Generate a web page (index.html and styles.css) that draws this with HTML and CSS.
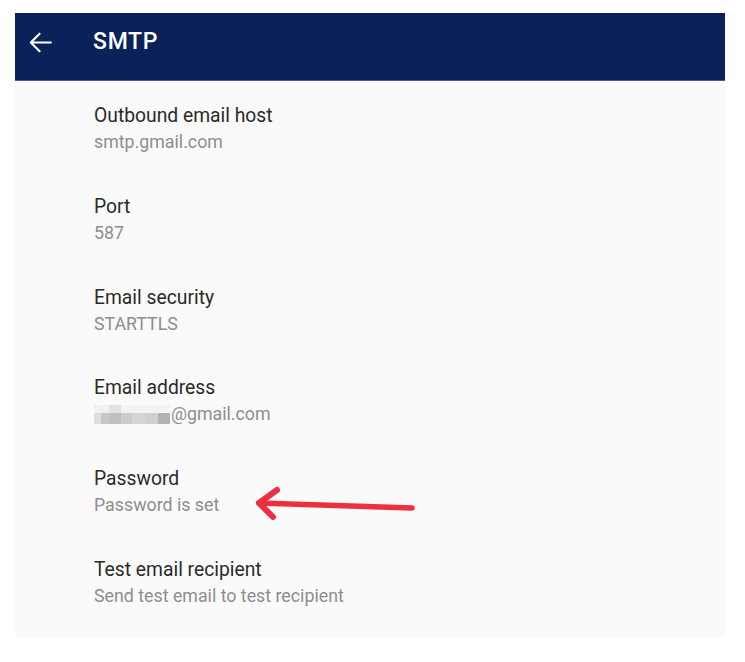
FILE: index.html
```html
<!DOCTYPE html>
<html lang="en">
<head>
<meta charset="utf-8">
<title>SMTP</title>
<link rel="stylesheet" href="styles.css">
</head>
<body>
<div class="page">
  <div class="card">
    <header class="appbar">
      <svg class="back" viewBox="0 0 24 24" width="31" height="31" aria-hidden="true">
        <path d="M20 12H4.6 M11.3 5.2 4.5 12l6.8 6.8" fill="none" stroke="#fff" stroke-width="1.6" stroke-linecap="round" stroke-linejoin="round"/>
      </svg>
      <h1 class="title">SMTP</h1>
    </header>
    <div class="list">
      <div class="row">
        <div class="row-title">Outbound email host</div>
        <div class="row-sub">smtp.gmail.com</div>
      </div>
      <div class="row">
        <div class="row-title">Port</div>
        <div class="row-sub">587</div>
      </div>
      <div class="row">
        <div class="row-title">Email security</div>
        <div class="row-sub">STARTTLS</div>
      </div>
      <div class="row">
        <div class="row-title">Email address</div>
        <div class="row-sub"><span class="mosaic" aria-hidden="true"><i class="m1"></i><i class="m2"></i><i class="m3"></i><i class="m4"></i><i class="m5"></i><i class="m6"></i><i class="m7"></i><i class="m8"></i><i class="m9"></i><i class="m10"></i></span>@gmail.com</div>
      </div>
      <div class="row">
        <div class="row-title">Password</div>
        <div class="row-sub">Password is set</div>
      </div>
      <div class="row">
        <div class="row-title">Test email recipient</div>
        <div class="row-sub">Send test email to test recipient</div>
      </div>
    </div>
    <svg class="annot" viewBox="0 0 190 60" width="190" height="60" aria-hidden="true">
      <path d="M24 36 L177 41" fill="none" stroke="#ee2f3f" stroke-width="5.5" stroke-linecap="round"/>
      <path d="M42 23 L24 36 L38 50" fill="none" stroke="#ee2f3f" stroke-width="6" stroke-linecap="round" stroke-linejoin="round"/>
    </svg>
  </div>
</div>
</body>
</html>
```

FILE: styles.css
```css
* { box-sizing: border-box; }
html, body { margin: 0; padding: 0; background: #ffffff; }
body { font-family: Roboto, "Liberation Sans", Arial, sans-serif; }

.page {
  padding: 13px 20px 0 15px;
}

.card {
  position: relative;
  width: 710px;
  background: #fafafa;
  padding-bottom: 11px;
}

.appbar {
  height: 68px;
  background: #0a215a;
  border-bottom: 1px solid #4d5b86;
  display: flex;
  align-items: center;
  padding: 0 0 9px 10px;
}

.back { display: block; flex: none; }

.title {
  margin: 0 0 0 37px;
  font-size: 23px;
  font-weight: 500;
  letter-spacing: 0.7px;
  color: #ffffff;
  line-height: 26px;
}

.list { display: flex; flex-direction: column; }

.row {
  height: 90.8px;
  padding: 22px 0 0 79px;
}

.row-title {
  font-size: 19.3px;
  line-height: 26px;
  color: #2a2a2a;
}

.row-sub {
  font-size: 17.8px;
  line-height: 26px;
  color: #8e8e8e;
  display: flex;
  align-items: center;
}

.mosaic {
  display: grid;
  grid-template-columns: 7px 8px 12px 11px 13px 13px 12px;
  grid-template-rows: 8px 11px;
  width: 76px;
  margin: 0 1px 0 0;
}
.mosaic i { display: block; }
.m1 { grid-column: 1 / 3; background: #f1f1f1; }
.m2 { grid-column: 3 / 4; background: #e2e2e2; }
.m3 { grid-column: 4 / 8; background: #f3f3f3; }
.m4 { background: #dedede; }
.m5 { background: #c6c6c6; }
.m6 { background: #c0c0c0; }
.m7 { background: #cccccc; }
.m8 { background: #d5d5d5; }
.m9 { background: #d0d0d0; }
.m10 { background: #b2b2b2; }

.annot {
  position: absolute;
  left: 220px;
  top: 454px;
}
```
